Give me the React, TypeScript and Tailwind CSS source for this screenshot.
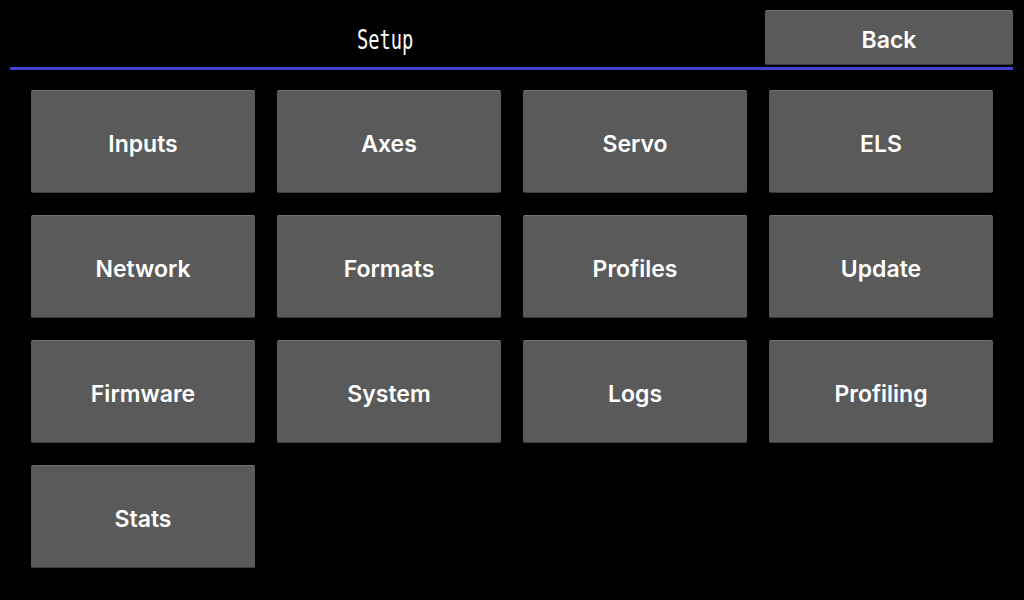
import React from 'react';

const items = [
  'Inputs',
  'Axes',
  'Servo',
  'ELS',
  'Network',
  'Formats',
  'Profiles',
  'Update',
  'Firmware',
  'System',
  'Logs',
  'Profiling',
  'Stats',
];

const MenuButton: React.FC<{ label: string; className?: string }> = ({ label, className }) => (
  <button
    className={`flex items-center justify-center rounded-[2px] border-t border-t-[#727272] border-b border-b-[#3c3c3c] bg-[#5a5a5a] pt-[5px] font-['Inter',sans-serif] text-[23px] font-semibold text-white ${className ?? ''}`}>
    {label}
  </button>
);

export default function App() {
  return (
    <div className="h-[600px] w-[1024px] overflow-hidden bg-black">
      {/* Cabecera */}
      <div className="pl-[10px] pr-[11px] pt-[10px]">
        <div className="flex h-[55px] items-center">
          <div className="flex flex-1 items-center justify-center pt-[5px]">
            <span className="inline-block translate-x-[-2px] scale-x-[0.72] font-['DejaVu_Sans_Mono',monospace] text-[26px] leading-none text-white">
              Setup
            </span>
          </div>
          <MenuButton label="Back" className="h-[55px] w-[248px]" />
        </div>
        <div className="mt-[2px] h-[3px] bg-[#4343c9]" />
      </div>

      {/* Rejilla de opciones */}
      <div className="ml-[31px] mt-[20px] grid w-[962px] grid-cols-4 gap-[22px]">
        {items.map((item) => (
          <MenuButton key={item} label={item} className="h-[103px]" />
        ))}
      </div>
    </div>
  );
}
